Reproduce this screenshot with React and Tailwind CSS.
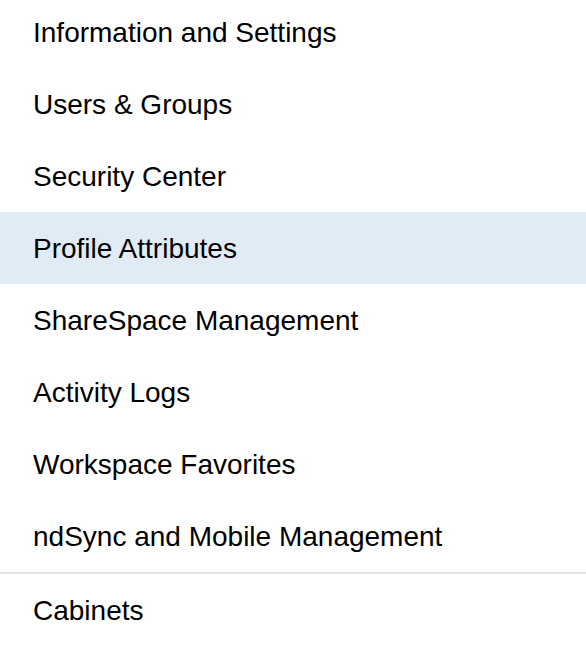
export default function App() {
  const items = [
    "Information and Settings",
    "Users & Groups",
    "Security Center",
    "Profile Attributes",
    "ShareSpace Management",
    "Activity Logs",
    "Workspace Favorites",
    "ndSync and Mobile Management",
  ];
  return (
    <div className="w-[586px] h-[652px] overflow-hidden bg-white text-black" style={{ fontFamily: '"Liberation Sans", Arial, sans-serif' }}>
      <div className="-mt-[4px]">
        {items.map((t, i) => (
          <div
            key={t}
            className={`h-[72px] flex items-center pl-[33px] pt-[2px] text-[28px] ${i === 3 ? "bg-[#e1ebf5]" : ""}`}
          >
            {t}
          </div>
        ))}
      </div>
      <div className="h-[2px] bg-[#e3e3e3]" />
      <div className="h-[72px] flex items-center pl-[33px] pt-[2px] text-[28px]">Cabinets</div>
    </div>
  );
}
